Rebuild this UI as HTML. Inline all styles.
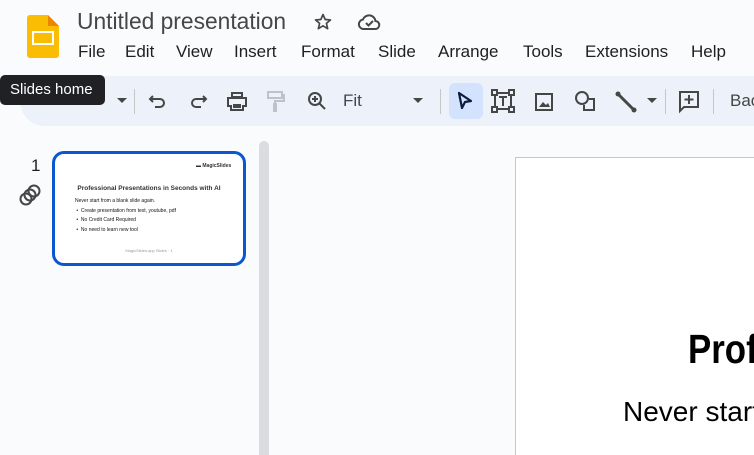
<!DOCTYPE html>
<html><head><style>
*{margin:0;padding:0;box-sizing:border-box}
html,body{width:754px;height:455px;overflow:hidden}
body{background:#f9fbfd;font-family:"Liberation Sans",Arial,sans-serif;position:relative;color:#1f1f1f}
.a{position:absolute}
.menu span{margin-right:0;position:absolute;top:0;font-size:17px;color:#1f1f1f}
svg{position:absolute}
</style></head><body>
<div class="a" style="left:27px;top:15px;width:32px;height:43px;background:#fbbc04;border-radius:3px"></div>
<div class="a" style="left:48px;top:15px;width:0;height:0;border-top:11px solid #f9fbfd;border-left:11px solid #ea8600"></div>
<div class="a" style="left:32px;top:31px;width:22px;height:14px;border:2.5px solid #fff"></div>
<div class="a" style="left:77px;top:8px;font-size:22.8px;color:#444746">Untitled presentation</div>
<svg style="left:313px;top:12px" width="20" height="20" viewBox="0 0 24 24"><path d="M12 3l2.6 6 6.4.5-4.9 4.2 1.5 6.3L12 16.6 6.4 20l1.5-6.3L3 9.5 9.4 9z" fill="none" stroke="#444746" stroke-width="2" stroke-linejoin="round"/></svg>
<svg style="left:357px;top:11px" width="24" height="22" viewBox="0 0 24 22"><path d="M6 18h12a4 4 0 0 0 .5-8A6.5 6.5 0 0 0 6 8.5 4.8 4.8 0 0 0 6 18z" fill="none" stroke="#444746" stroke-width="2"/><path d="M9 12l2.5 2.5L16 10" fill="none" stroke="#444746" stroke-width="2"/></svg>
<div class="menu a" style="left:0;top:42px;width:754px;height:22px">
<span style="left:78px">File</span><span style="left:125px">Edit</span><span style="left:176px">View</span><span style="left:234px">Insert</span><span style="left:301px">Format</span><span style="left:378px">Slide</span><span style="left:438px">Arrange</span><span style="left:523px">Tools</span><span style="left:585px">Extensions</span><span style="left:691px">Help</span>
</div>
<div class="a" style="left:20px;top:76px;width:734px;height:50px;background:#edf2fa;border-radius:25px 0 0 25px"></div>
<div class="a" style="left:449px;top:83px;width:34px;height:36px;background:#d3e3fd;border-radius:6px"></div>
<div class="a" style="left:134px;top:89px;width:1px;height:25px;background:#c4c7c5"></div>
<div class="a" style="left:440px;top:89px;width:1px;height:25px;background:#c4c7c5"></div>
<div class="a" style="left:665px;top:89px;width:1px;height:25px;background:#c4c7c5"></div>
<div class="a" style="left:713px;top:89px;width:1px;height:25px;background:#c4c7c5"></div>
<svg style="left:116px;top:97px" width="12" height="8"><path d="M1 1h10L6 6z" fill="#444746"/></svg>
<svg style="left:412px;top:97px" width="12" height="8"><path d="M1 1h10L6 6z" fill="#444746"/></svg>
<svg style="left:646px;top:97px" width="12" height="8"><path d="M1 1h10L6 6z" fill="#444746"/></svg>
<svg style="left:148px;top:91px" width="20" height="20" viewBox="0 0 20 20"><path d="M5 5L2 8l3 3M2 8h10a4 4 0 0 1 0 8H7" fill="none" stroke="#444746" stroke-width="2"/></svg>
<svg style="left:188px;top:91px" width="20" height="20" viewBox="0 0 20 20"><path d="M15 5l3 3-3 3M18 8H8a4 4 0 0 0 0 8h5" fill="none" stroke="#444746" stroke-width="2"/></svg>
<svg style="left:226px;top:90px" width="22" height="22" viewBox="0 0 22 22"><path d="M6 3h10v4H6zM2 8h18v8h-3v4H5v-4H2z" fill="none" stroke="#444746" stroke-width="2"/><rect x="7" y="14" width="8" height="4" fill="#444746"/></svg>
<svg style="left:266px;top:90px" width="20" height="22" viewBox="0 0 20 22"><path d="M2 2h14v6H2zM16 5h2v6H9v3M8 14h2v7H8z" fill="none" stroke="#bfc2c6" stroke-width="2"/></svg>
<svg style="left:306px;top:90px" width="22" height="22" viewBox="0 0 22 22"><circle cx="9" cy="9" r="6" fill="none" stroke="#444746" stroke-width="2"/><path d="M13 13l6 6M9 6v6M6 9h6" stroke="#444746" stroke-width="2"/></svg>
<div class="a" style="left:343px;top:91px;font-size:17px;color:#444746">Fit</div>
<svg style="left:455px;top:90px" width="20" height="22" viewBox="0 0 20 22"><path d="M4 3l12 8-6 1-3 6z" fill="none" stroke="#0b1d3a" stroke-width="2.2" stroke-linejoin="round"/></svg>
<svg style="left:491px;top:89px" width="24" height="24" viewBox="0 0 24 24"><path d="M4 4h16v16H4z" fill="none" stroke="#444746" stroke-width="2"/><rect x="1" y="1" width="5" height="5" fill="#edf2fa" stroke="#444746" stroke-width="2"/><rect x="18" y="1" width="5" height="5" fill="#edf2fa" stroke="#444746" stroke-width="2"/><rect x="1" y="18" width="5" height="5" fill="#edf2fa" stroke="#444746" stroke-width="2"/><rect x="18" y="18" width="5" height="5" fill="#edf2fa" stroke="#444746" stroke-width="2"/><path d="M8 8h8M12 8v9" stroke="#444746" stroke-width="2"/></svg>
<svg style="left:534px;top:92px" width="20" height="20" viewBox="0 0 20 20"><rect x="2" y="2" width="16" height="16" fill="none" stroke="#444746" stroke-width="2"/><path d="M5 15l4-5 3 3 2-2 2 4z" fill="#444746"/></svg>
<svg style="left:573px;top:89px" width="26" height="26" viewBox="0 0 26 26"><circle cx="9" cy="9" r="6" fill="none" stroke="#444746" stroke-width="2"/><path d="M16 10h5v11H11v-5" fill="none" stroke="#444746" stroke-width="2"/></svg>
<svg style="left:614px;top:90px" width="24" height="24" viewBox="0 0 24 24"><path d="M4 4l16 16" stroke="#444746" stroke-width="3" stroke-linecap="round"/><circle cx="4" cy="4" r="2.5" fill="#444746"/><circle cx="20" cy="20" r="2.5" fill="#444746"/></svg>
<svg style="left:678px;top:90px" width="22" height="24" viewBox="0 0 22 24"><path d="M2 2h18v15H6l-4 4z" fill="none" stroke="#444746" stroke-width="2"/><path d="M11 5v9M6.5 9.5h9" stroke="#444746" stroke-width="2"/></svg>
<div class="a" style="left:730px;top:91px;width:24px;overflow:hidden;white-space:nowrap;font-size:17px;color:#444746">Bac</div>
<div class="a" style="left:0;top:75px;width:105px;height:30px;background:#202124;border-radius:5px;color:#fff;font-size:15px;line-height:30px;padding-left:10px">Slides home</div>
<div class="a" style="left:31px;top:156px;font-size:17px;color:#1f1f1f">1</div>
<svg style="left:18px;top:184px" width="24" height="22" viewBox="0 0 24 22"><circle cx="8" cy="15" r="5.5" fill="none" stroke="#444746" stroke-width="2"/><circle cx="12" cy="11" r="5.5" fill="none" stroke="#444746" stroke-width="2"/><circle cx="16" cy="7" r="5.5" fill="none" stroke="#444746" stroke-width="2"/></svg>
<div class="a" style="left:52px;top:151px;width:194px;height:115px;border:3px solid #0b57d0;border-radius:12px;background:#fff;overflow:hidden">
<div class="a" style="left:141px;top:9px;font-size:5px;font-weight:bold;color:#333">▬ MagicSlides</div>
<div class="a" style="left:0;width:188px;top:31px;text-align:center;font-size:6.5px;font-weight:bold;color:#333">Professional Presentations in Seconds with AI</div>
<div class="a" style="left:20px;top:43px;font-size:5px;line-height:9.5px;color:#111">Never start from a blank slide again.<br>&nbsp;•&nbsp; Create presentation from text, youtube, pdf<br>&nbsp;•&nbsp; No Credit Card Required<br>&nbsp;•&nbsp; No need to learn new tool</div>
<div class="a" style="left:0;width:188px;top:94px;text-align:center;font-size:4px;color:#999">MagicSlides.app Slides · 1</div>
</div>
<div class="a" style="left:259px;top:141px;width:10px;height:314px;background:#dadce0;border-radius:5px 5px 0 0"></div>
<div class="a" style="left:515px;top:157px;width:239px;height:298px;background:#fff;border-left:1px solid #c7c7c7;border-top:1px solid #c7c7c7;overflow:hidden">
<div class="a" style="left:172px;top:168px;font-size:41px;font-weight:bold;color:#000;font-family:'Liberation Sans Narrow','Liberation Sans',sans-serif;transform:scaleX(.85);transform-origin:left;white-space:nowrap">Professional</div>
<div class="a" style="left:107px;top:238px;font-size:28px;color:#000;white-space:nowrap">Never start</div>
</div>
</body></html>
